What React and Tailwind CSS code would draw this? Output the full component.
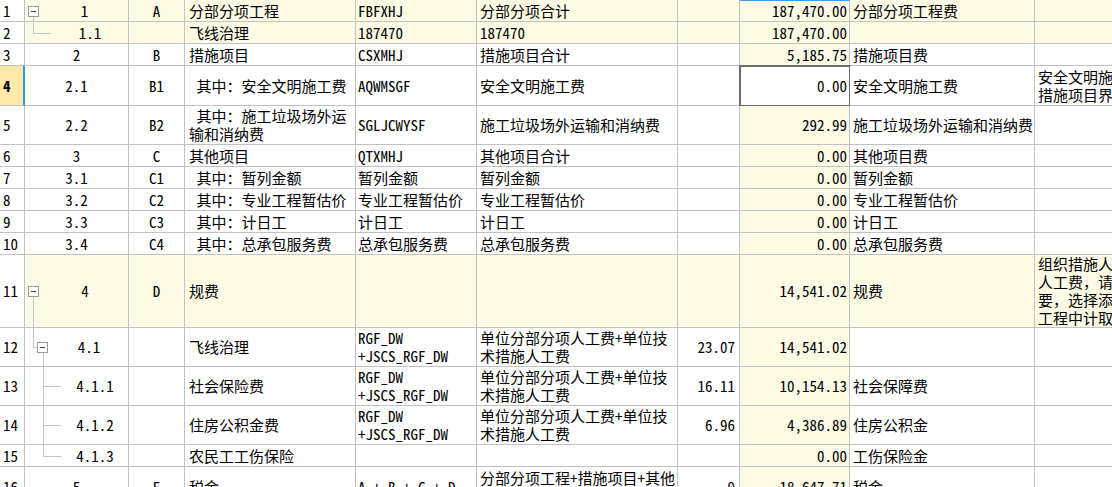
import React from "react";
import clsx from "clsx";

const W = [
  "w-[25px]",
  "w-[104px]",
  "w-[56px]",
  "w-[171px]",
  "w-[121px]",
  "w-[201px]",
  "w-[62px]",
  "w-[110px]",
  "w-[185px]",
  "w-[120px]",
];

const FORMULA = ["RGF_DW", "+JSCS_RGF_DW"];
const FDESC = ["单位分部分项人工费+单位技", "术措施人工费"];

const rows = [
  { n: "1", code: "1", tree: "r1", pl: "pl-[16px]", cl: "A", name: ["分部分项工程"], fc: ["FBFXHJ"], fd: ["分部分项合计"], amt: "187,470.00", fee: "分部分项工程费", hl: true, h: "h-[22px]", top: true },
  { n: "2", code: "1.1", tree: "r2", pl: "pl-[27px]", name: ["飞线治理"], fc: ["187470"], fd: ["187470"], amt: "187,470.00", hl: true, h: "h-[22px]" },
  { n: "3", code: "2", cl: "B", name: ["措施项目"], fc: ["CSXMHJ"], fd: ["措施项目合计"], amt: "5,185.75", fee: "措施项目费", h: "h-[22px]" },
  { n: "4", code: "2.1", cl: "B1", name: [" 其中：安全文明施工费"], fc: ["AQWMSGF"], fd: ["安全文明施工费"], amt: "0.00", fee: "安全文明施工费", rem: ["安全文明施", "措施项目界"], sel: true, h: "h-[40px]" },
  { n: "5", code: "2.2", cl: "B2", name: [" 其中：施工垃圾场外运", "输和消纳费"], fc: ["SGLJCWYSF"], fd: ["施工垃圾场外运输和消纳费"], amt: "292.99", fee: "施工垃圾场外运输和消纳费", h: "h-[39px]" },
  { n: "6", code: "3", cl: "C", name: ["其他项目"], fc: ["QTXMHJ"], fd: ["其他项目合计"], amt: "0.00", fee: "其他项目费", h: "h-[22px]" },
  { n: "7", code: "3.1", cl: "C1", name: [" 其中：暂列金额"], fc: ["暂列金额"], fd: ["暂列金额"], amt: "0.00", fee: "暂列金额", h: "h-[22px]" },
  { n: "8", code: "3.2", cl: "C2", name: [" 其中：专业工程暂估价"], fc: ["专业工程暂估价"], fd: ["专业工程暂估价"], amt: "0.00", fee: "专业工程暂估价", h: "h-[22px]" },
  { n: "9", code: "3.3", cl: "C3", name: [" 其中：计日工"], fc: ["计日工"], fd: ["计日工"], amt: "0.00", fee: "计日工", h: "h-[22px]" },
  { n: "10", code: "3.4", cl: "C4", name: [" 其中：总承包服务费"], fc: ["总承包服务费"], fd: ["总承包服务费"], amt: "0.00", fee: "总承包服务费", h: "h-[22px]" },
  { n: "11", code: "4", tree: "r11", pl: "pl-[17px]", cl: "D", name: ["规费"], amt: "14,541.02", fee: "规费", rem: ["组织措施人", "人工费，请", "要，选择添", "工程中计取"], remTop: true, hl: true, h: "h-[73px]" },
  { n: "12", code: "4.1", tree: "r12", pl: "pl-[25px]", name: ["飞线治理"], fc: FORMULA, fd: FDESC, rate: "23.07", amt: "14,541.02", h: "h-[39px]" },
  { n: "13", code: "4.1.1", tree: "leaf", pl: "pl-[37px]", name: ["社会保险费"], fc: FORMULA, fd: FDESC, rate: "16.11", amt: "10,154.13", fee: "社会保障费", h: "h-[39px]" },
  { n: "14", code: "4.1.2", tree: "leaf", pl: "pl-[37px]", name: ["住房公积金费"], fc: FORMULA, fd: FDESC, rate: "6.96", amt: "4,386.89", fee: "住房公积金", h: "h-[39px]" },
  { n: "15", code: "4.1.3", tree: "last", pl: "pl-[37px]", name: ["农民工工伤保险"], amt: "0.00", fee: "工伤保险金", h: "h-[22px]" },
  { n: "16", code: "5", cl: "E", name: ["税金"], fc: ["A + B + C + D"], fd: ["分部分项工程+措施项目+其他", "项目+规费"], rate: "9", amt: "18,647.71", fee: "税金", h: "h-[40px]" },
];

// tree connector lines + collapse boxes, drawn in the code cell
function MinusBox({ x, y }) {
  return (
    <g>
      <rect x={x + 0.5} y={y + 0.5} width="10" height="10" fill="#fff" stroke="#9c9c9c" />
      <line x1={x + 3} x2={x + 8} y1={y + 5.5} y2={y + 5.5} stroke="#444" />
    </g>
  );
}

function Tree({ kind }) {
  const c = "#c4c4c4";
  return (
    <svg className="absolute inset-0 h-[80px] w-[104px]" width="104" height="80">
      {kind === "r1" && (
        <>
          <MinusBox x={3} y={6} />
          <line x1="8.5" x2="8.5" y1="17" y2="24" stroke={c} />
        </>
      )}
      {kind === "r2" && (
        <path d="M8.5 0 V11.5 H26" fill="none" stroke={c} />
      )}
      {kind === "r11" && (
        <>
          <MinusBox x={3} y={31} />
          <line x1="8.5" x2="8.5" y1="42" y2="80" stroke={c} />
        </>
      )}
      {kind === "r12" && (
        <>
          <path d="M8.5 0 V19.5 H12" fill="none" stroke={c} />
          <MinusBox x={12} y={14} />
          <line x1="18.5" x2="18.5" y1="25" y2="80" stroke={c} />
        </>
      )}
      {kind === "leaf" && (
        <path d="M18.5 0 V80 M18.5 19.5 H36" fill="none" stroke={c} />
      )}
      {kind === "last" && (
        <path d="M18.5 0 V11.5 H36" fill="none" stroke={c} />
      )}
    </svg>
  );
}

function Cell({ w, className, children }) {
  return (
    <div
      className={clsx(
        "relative flex shrink-0 items-center overflow-hidden border-b border-r border-[#c2c2c2]",
        w,
        className
      )}
    >
      {children}
    </div>
  );
}

function Lines({ lines }) {
  if (!lines) return null;
  return (
    <div className="leading-[18px]">
      {lines.map((t, i) => (
        <div key={i} className="whitespace-pre">
          {t}
        </div>
      ))}
    </div>
  );
}

function Row({ r }) {
  const bg = r.hl ? "bg-[#fdfbe6]" : "bg-white";
  return (
    <div className={clsx("flex", r.h)}>
      <Cell
        w={W[0]}
        className={clsx(
          "pl-[3px]",
          r.sel ? "border-r-2 border-r-[#2a9be0] bg-[#ffe9a8] font-bold" : "bg-white"
        )}
      >
        {r.n}
      </Cell>
      <Cell w={W[1]} className={clsx(bg, "justify-center", r.pl)}>
        {r.tree && <Tree kind={r.tree} />}
        <span className="relative">{r.code}</span>
      </Cell>
      <Cell w={W[2]} className={clsx(bg, "justify-center")}>
        {r.cl}
      </Cell>
      <Cell w={W[3]} className={clsx(bg, "pl-[4px]")}>
        <Lines lines={r.name} />
      </Cell>
      <Cell w={W[4]} className={clsx(bg, "pl-[2px]")}>
        <Lines lines={r.fc} />
      </Cell>
      <Cell w={W[5]} className={clsx(bg, "pl-[3px]")}>
        <Lines lines={r.fd} />
      </Cell>
      <Cell w={W[6]} className={clsx(bg, "justify-end pr-[4px]")}>
        {r.rate}
      </Cell>
      <Cell
        w={W[7]}
        className={clsx(
          "justify-end pr-[2px]",
          r.sel ? "bg-white outline-2 -outline-offset-1 outline-[#6c6c6c]" : "bg-[#fdfbe6]",
          r.top && "border-t border-t-[#3a9be2]"
        )}
      >
        {r.amt}
      </Cell>
      <Cell w={W[8]} className={clsx(bg, "pl-[3px]")}>
        {r.fee}
      </Cell>
      <Cell
        w={W[9]}
        className={clsx(bg, "pl-[3px]", r.remTop && "items-start")}
      >
        <Lines lines={r.rem} />
      </Cell>
    </div>
  );
}

export default function App() {
  return (
    <div
      className="h-[487px] w-[1112px] overflow-hidden bg-white text-[15px] leading-[18px] text-black"
      style={{ fontFamily: '"Noto Sans Mono CJK SC", "Liberation Mono", "Noto Sans CJK SC", monospace' }}
    >
      {rows.map((r) => (
        <Row key={r.n} r={r} />
      ))}
    </div>
  );
}
